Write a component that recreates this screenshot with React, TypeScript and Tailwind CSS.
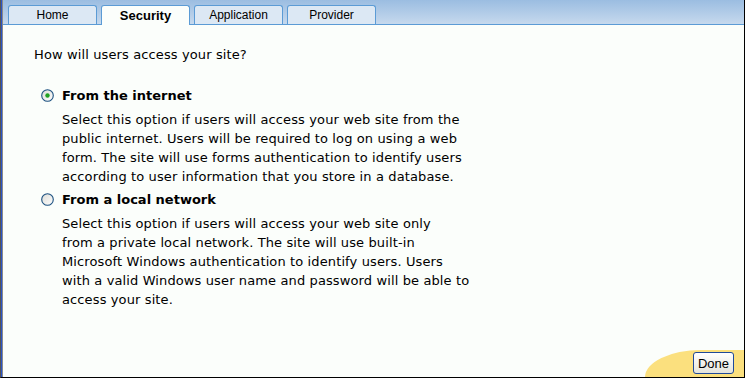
const tabs = ["Home", "Security", "Application", "Provider"];

const Radio = ({ checked }: { checked: boolean }) => (
    <svg width="13" height="13" viewBox="0 0 13 13" className="shrink-0">
        <defs>
            <linearGradient id={checked ? "rg1" : "rg2"} x1="0" y1="0" x2="1" y2="1">
                <stop offset="0" stopColor="#dcdcd6" />
                <stop offset="1" stopColor="#ffffff" />
            </linearGradient>
        </defs>
        <circle cx="6.5" cy="6.5" r="5.8" fill={`url(#${checked ? "rg1" : "rg2"})`} stroke="#1c5180" strokeWidth="1.1" />
        {checked && <circle cx="6.5" cy="6.5" r="2.2" fill="#21a121" />}
    </svg>
);

const Option = ({ checked, title, lines }: { checked: boolean; title: string; lines: string[] }) => (
    <div className="flex flex-col">
        <div className="flex items-center gap-[8px] h-[19px]">
            <Radio checked={checked} />
            <span className="font-bold tracking-normal">{title}</span>
        </div>
        <div className="pl-[21px] mt-[5px]">
            {lines.map((l) => (
                <div key={l}>{l}</div>
            ))}
        </div>
    </div>
);

export default function App() {
    return (
        <div className="w-[745px] h-[378px] flex flex-col bg-[#fbfefb] text-black text-[13px] leading-[19px] tracking-[0.12px] font-['DejaVu_Sans',sans-serif] border-l-[1px] border-l-[#555] border-r border-r-black border-b border-b-black">
            <div className="flex-1 flex flex-col border-l-[1px] border-l-[#2a55c8]">
                <div className="flex-1 flex flex-col border-l-[1px] border-l-[#8a8a8a]">
                    <div className="h-[25px] flex items-end gap-[4px] pl-[5px] bg-gradient-to-b from-[#9bbde1] to-[#c6d9ed] border-b border-b-[#5b9bd5]">
                        {tabs.map((t) =>
                            t === "Security" ? (
                                <div
                                    key={t}
                                    className="w-[89px] h-[20px] -mb-px flex items-center justify-center bg-[#fbfefb] border border-b-0 border-[#5b9bd5] rounded-t-[3px] font-['Liberation_Sans',sans-serif] font-bold text-[13px] tracking-normal"
                                >
                                    {t}
                                </div>
                            ) : (
                                <div
                                    key={t}
                                    className="w-[89px] h-[19px] flex items-center justify-center bg-[#dce8f4] border border-b-0 border-[#5b9bd5] rounded-t-[3px] font-['Liberation_Sans',sans-serif] text-[12px] tracking-normal"
                                >
                                    {t}
                                </div>
                            )
                        )}
                    </div>
                    <div className="flex-1 flex flex-col pl-[31px] pt-[20px]">
                        <div>How will users access your site?</div>
                        <div className="flex flex-col gap-[4px] mt-[22px] pl-[7px]">
                            <Option
                                checked
                                title="From the internet"
                                lines={[
                                    "Select this option if users will access your web site from the",
                                    "public internet. Users will be required to log on using a web",
                                    "form. The site will use forms authentication to identify users",
                                    "according to user information that you store in a database.",
                                ]}
                            />
                            <Option
                                checked={false}
                                title="From a local network"
                                lines={[
                                    "Select this option if users will access your web site only",
                                    "from a private local network. The site will use built-in",
                                    "Microsoft Windows authentication to identify users. Users",
                                    "with a valid Windows user name and password will be able to",
                                    "access your site.",
                                ]}
                            />
                        </div>
                    </div>
                    <div className="flex justify-end">
                        <div className="w-[99px] h-[27px] rounded-tl-[56px_27px] bg-[#fbe07e] flex items-end justify-end pr-[10px] pb-[3px]">
                            <button className="w-[41px] h-[22px] rounded-[3px] border border-[#1f4a9a] bg-gradient-to-b from-white to-[#e4e4dc] font-['Liberation_Sans',sans-serif] text-[13px] leading-none tracking-normal">
                                Done
                            </button>
                        </div>
                    </div>
                </div>
            </div>
        </div>
    );
}
